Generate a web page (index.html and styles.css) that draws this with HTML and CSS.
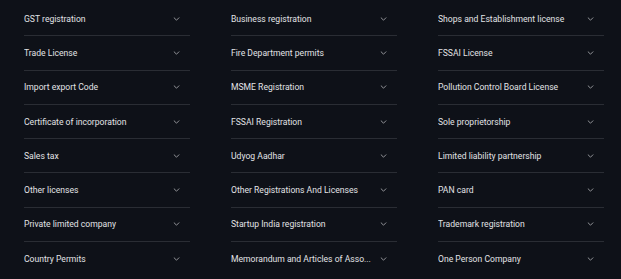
FILE: index.html
```html
<!DOCTYPE html>
<html>
<head>
<meta charset="utf-8">
<link rel="stylesheet" href="styles.css">
</head>
<body>
<div class="grid">
  <div class="col">
    <div class="item"><span class="label">GST registration</span><svg class="chev" viewBox="0 0 8 5"><polyline points="1,1 4,4 7,1"/></svg></div>
    <div class="item"><span class="label">Trade License</span><svg class="chev" viewBox="0 0 8 5"><polyline points="1,1 4,4 7,1"/></svg></div>
    <div class="item"><span class="label">Import export Code</span><svg class="chev" viewBox="0 0 8 5"><polyline points="1,1 4,4 7,1"/></svg></div>
    <div class="item"><span class="label">Certificate of incorporation</span><svg class="chev" viewBox="0 0 8 5"><polyline points="1,1 4,4 7,1"/></svg></div>
    <div class="item"><span class="label">Sales tax</span><svg class="chev" viewBox="0 0 8 5"><polyline points="1,1 4,4 7,1"/></svg></div>
    <div class="item"><span class="label">Other licenses</span><svg class="chev" viewBox="0 0 8 5"><polyline points="1,1 4,4 7,1"/></svg></div>
    <div class="item"><span class="label">Private limited company</span><svg class="chev" viewBox="0 0 8 5"><polyline points="1,1 4,4 7,1"/></svg></div>
    <div class="item"><span class="label">Country Permits</span><svg class="chev" viewBox="0 0 8 5"><polyline points="1,1 4,4 7,1"/></svg></div>
  </div>
  <div class="col">
    <div class="item"><span class="label">Business registration</span><svg class="chev" viewBox="0 0 8 5"><polyline points="1,1 4,4 7,1"/></svg></div>
    <div class="item"><span class="label">Fire Department permits</span><svg class="chev" viewBox="0 0 8 5"><polyline points="1,1 4,4 7,1"/></svg></div>
    <div class="item"><span class="label">MSME Registration</span><svg class="chev" viewBox="0 0 8 5"><polyline points="1,1 4,4 7,1"/></svg></div>
    <div class="item"><span class="label">FSSAI Registration</span><svg class="chev" viewBox="0 0 8 5"><polyline points="1,1 4,4 7,1"/></svg></div>
    <div class="item"><span class="label">Udyog Aadhar</span><svg class="chev" viewBox="0 0 8 5"><polyline points="1,1 4,4 7,1"/></svg></div>
    <div class="item"><span class="label">Other Registrations And Licenses</span><svg class="chev" viewBox="0 0 8 5"><polyline points="1,1 4,4 7,1"/></svg></div>
    <div class="item"><span class="label">Startup India registration</span><svg class="chev" viewBox="0 0 8 5"><polyline points="1,1 4,4 7,1"/></svg></div>
    <div class="item"><span class="label">Memorandum and Articles of Asso...</span><svg class="chev" viewBox="0 0 8 5"><polyline points="1,1 4,4 7,1"/></svg></div>
  </div>
  <div class="col">
    <div class="item"><span class="label">Shops and Establishment license</span><svg class="chev" viewBox="0 0 8 5"><polyline points="1,1 4,4 7,1"/></svg></div>
    <div class="item"><span class="label">FSSAI License</span><svg class="chev" viewBox="0 0 8 5"><polyline points="1,1 4,4 7,1"/></svg></div>
    <div class="item"><span class="label">Pollution Control Board License</span><svg class="chev" viewBox="0 0 8 5"><polyline points="1,1 4,4 7,1"/></svg></div>
    <div class="item"><span class="label">Sole proprietorship</span><svg class="chev" viewBox="0 0 8 5"><polyline points="1,1 4,4 7,1"/></svg></div>
    <div class="item"><span class="label">Limited liability partnership</span><svg class="chev" viewBox="0 0 8 5"><polyline points="1,1 4,4 7,1"/></svg></div>
    <div class="item"><span class="label">PAN card</span><svg class="chev" viewBox="0 0 8 5"><polyline points="1,1 4,4 7,1"/></svg></div>
    <div class="item"><span class="label">Trademark registration</span><svg class="chev" viewBox="0 0 8 5"><polyline points="1,1 4,4 7,1"/></svg></div>
    <div class="item"><span class="label">One Person Company</span><svg class="chev" viewBox="0 0 8 5"><polyline points="1,1 4,4 7,1"/></svg></div>
  </div>
</div>
</body>
</html>
```
FILE: styles.css
```css
html, body {
  margin: 0;
  padding: 0;
  background: #0e1118;
}
body {
  font-family: Roboto, "Liberation Sans", sans-serif;
  color: #e2e3e6;
  font-size: 8.6px;
}
.grid {
  display: grid;
  grid-template-columns: 166px 166px 166px;
  column-gap: 41px;
  padding-left: 24px;
  padding-top: 2px;
}
.col {
  display: flex;
  flex-direction: column;
}
.item {
  height: 33.3px;
  display: flex;
  align-items: center;
  border-bottom: 1px solid #2a2d34;
  padding-right: 10px;
}
.item:last-child {
  border-bottom: none;
}
.label {
  flex: 1;
  min-width: 0;
  white-space: nowrap;
  overflow: hidden;
  padding-right: 8px;
}
.chev {
  width: 7px;
  height: 4px;
  flex: none;
  fill: none;
  stroke: #a4a6ab;
  stroke-width: 1.1;
  stroke-linecap: round;
  stroke-linejoin: round;
}
```
